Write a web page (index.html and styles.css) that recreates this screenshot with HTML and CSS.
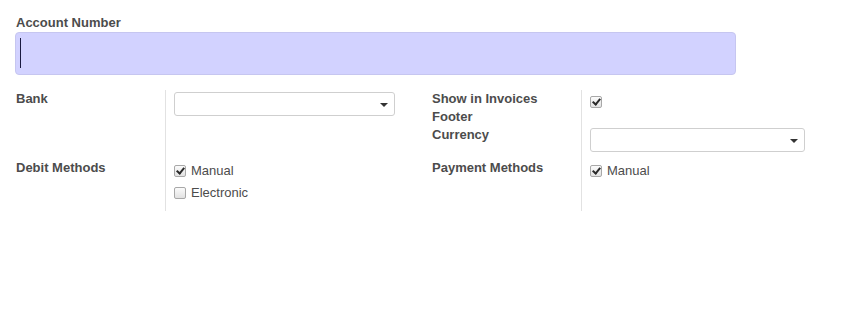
FILE: index.html
```html
<!DOCTYPE html>
<html lang="en">
<head>
  <meta charset="UTF-8" />
  <title>Bank Account</title>
  <link rel="stylesheet" href="styles.css">
</head>
<body>
  <div class="sheet">
    <div class="field-title">Account Number</div>
    <div class="big-input"><span class="caret"></span></div>

    <div class="groups">
      <div class="group group-left">
        <div class="label">Bank</div>
        <div class="value">
          <div class="select"><span class="arrow"></span></div>
        </div>
        <div class="label">Debit Methods</div>
        <div class="value checks">
          <label class="check-line"><span class="box checked"></span>Manual</label>
          <label class="check-line"><span class="box"></span>Electronic</label>
        </div>
      </div>

      <div class="group group-right">
        <div class="label">Show in Invoices Footer</div>
        <div class="value">
          <span class="box checked single"></span>
        </div>
        <div class="label">Currency</div>
        <div class="value">
          <div class="select"><span class="arrow"></span></div>
        </div>
        <div class="label">Payment Methods</div>
        <div class="value checks">
          <label class="check-line"><span class="box checked"></span>Manual</label>
        </div>
      </div>
    </div>
  </div>
</body>
</html>
```

FILE: styles.css
```css
body {
  margin: 0;
  background: #fff;
  font-family: "Liberation Sans", Arial, sans-serif;
  font-size: 13px;
  line-height: 18px;
  color: #4c4c4c;
}

.sheet {
  padding: 14px 0 0 16px;
}

.field-title {
  font-weight: bold;
  height: 18px;
}

.big-input {
  box-sizing: border-box;
  width: 721px;
  height: 43px;
  margin-left: -1px;
  background: #d2d2ff;
  border: 1px solid #c6c6f0;
  border-radius: 4px;
  padding: 5px 0 0 4px;
}

.caret {
  display: block;
  width: 1px;
  height: 30px;
  background: #1a1a40;
}

.groups {
  display: flex;
  gap: 37px;
  margin-top: 15px;
}

.group {
  display: grid;
}

.group-left {
  grid-template-columns: 150px 229px;
  grid-template-rows: 69px 52px;
}

.group-right {
  grid-template-columns: 150px 223px;
  grid-template-rows: 36px 33px 52px;
}

.label {
  box-sizing: border-box;
  font-weight: bold;
  border-right: 1px solid #e2e2e2;
  padding-right: 20px;
}

.value {
  padding-left: 8px;
}

.checks {
  padding-top: 1px;
}

.select {
  position: relative;
  box-sizing: border-box;
  height: 24px;
  margin-top: 2px;
  border: 1px solid #cfcfcf;
  border-radius: 3px;
  background: #fff;
}

.group-left .select {
  width: 221px;
}

.group-right .select {
  width: 215px;
}

.arrow {
  position: absolute;
  right: 6px;
  top: 10px;
  width: 0;
  height: 0;
  border-left: 4px solid transparent;
  border-right: 4px solid transparent;
  border-top: 4px solid #333;
}

.check-line {
  display: flex;
  align-items: center;
  height: 22px;
  gap: 5px;
}

.box {
  box-sizing: border-box;
  display: inline-block;
  width: 12px;
  height: 12px;
  border: 1px solid #a8a8a8;
  border-radius: 2px;
  background: linear-gradient(#fbfbfb, #e2e2e2);
  position: relative;
}

.box.checked::after {
  content: "";
  position: absolute;
  left: 3px;
  top: 0;
  width: 3px;
  height: 6px;
  border-right: 2px solid #2a2a2a;
  border-bottom: 2px solid #2a2a2a;
  transform: rotate(40deg);
}

.box.single {
  margin-top: 6px;
}
```
